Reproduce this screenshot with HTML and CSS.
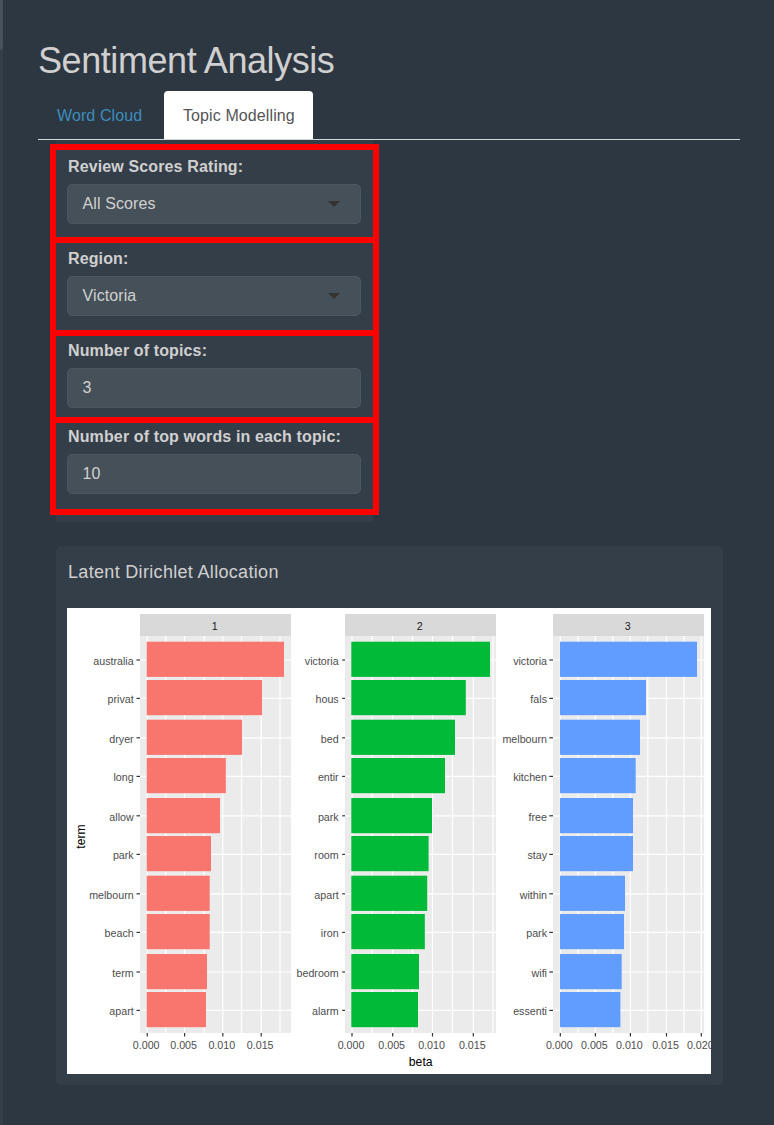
FILE: index.html
```html
<!DOCTYPE html>
<html lang="en">
<head>
<meta charset="utf-8">
<title>Sentiment Analysis</title>
<link rel="stylesheet" href="styles.css">
</head>
<body>
<div class="sidebar-edge"><div class="scroll-thumb"></div></div>
<main class="page">
  <h1 class="title">Sentiment Analysis</h1>
  <nav class="tabs">
    <a class="tab">Word Cloud</a>
    <a class="tab tab-active">Topic Modelling</a>
  </nav>
  <section class="filters">
    <div class="field field-score"><label class="label">Review Scores Rating:</label><div class="control">All Scores<i class="caret"></i></div></div>
    <div class="field field-region"><label class="label">Region:</label><div class="control">Victoria<i class="caret"></i></div></div>
    <div class="field field-topics"><label class="label">Number of topics:</label><div class="control">3</div></div>
    <div class="field field-words"><label class="label">Number of top words in each topic:</label><div class="control">10</div></div>
  </section>
  <section class="card">
    <h2 class="card-title">Latent Dirichlet Allocation</h2>
    <svg class="chart" id="chart" viewBox="67 608 644 466" width="644" height="466"></svg>
  </section>
</main>
<script src="chart.js"></script>
</body>
</html>
```
FILE: styles.css
```css
* { box-sizing: border-box; }
body {
  margin: 0;
  height: 1125px;
  display: flex;
  overflow: hidden;
  background: #2d3741;
  color: #d0d0d0;
  font: 16px/22px "Liberation Sans", Arial, sans-serif;
  letter-spacing: 0.1px;
}
.sidebar-edge { width: 3px; background: #343e48; }
.scroll-thumb { height: 50px; background: #46515a; border-radius: 0 0 3px 0; }
.page { width: 737px; padding: 41px 0 0 35px; }
.title { margin: 0; height: 50px; font-size: 36px; line-height: 40px; font-weight: 400; letter-spacing: -0.43px; white-space: nowrap; }
.tabs { display: flex; height: 49px; border-bottom: 1px solid #d2d4d6; width: 702px; }
.tab { padding: 14px 18px 0 19px; height: 48px; width: 126px; color: #3c8dbc; white-space: nowrap; }
.tab-active { width: 149px; color: #555; background: #fff; border-radius: 4px 4px 0 0; }
.filters { margin-left: 12px; width: 329px; height: 382px; padding-top: 4px; background: linear-gradient(#343e48, #343e48) 6px 0 / 317px 382px no-repeat; }
.field { border: 6px solid #f00; padding: 0 11px; }
.field + .field { border-top: 0; }
.field-score { height: 99px; padding-top: 6px; }
.field-region { height: 93px; padding-top: 5px; }
.field-topics { height: 87px; padding-top: 4px; }
.field-words { height: 92px; padding-top: 3px; }
.label { display: block; height: 28px; padding-left: 1px; font-weight: 700; letter-spacing: 0.13px; white-space: nowrap; }
.control { display: flex; align-items: center; justify-content: space-between; height: 40px; width: 294px; border: 1px solid #4a5761; border-radius: 5px; background: #455059; padding: 0 20px 0 14.5px; }
.caret { border: 6px solid transparent; border-top-color: #333; border-bottom: 0; }
.card { margin: 24px 0 0 18px; width: 667px; height: 539px; padding: 15px 0 0 11px; background: #343e48; border-radius: 5px; }
.card-title { margin: 0; height: 47px; padding-left: 1px; font-size: 18px; line-height: 22px; font-weight: 400; letter-spacing: 0.32px; }
.chart { display: block; background: #fff; font: 10.7px "Liberation Sans", Arial, sans-serif; letter-spacing: 0; }
.strip { fill: #d9d9d9; }
.panel { fill: #ebebeb; }
.grid { stroke: #fff; stroke-width: 1.2; }
.tick { stroke: #333; stroke-width: 1.2; }
.tick-text { fill: #4d4d4d; }
.strip-text { fill: #1a1a1a; }
.axis-title { fill: #000; font-size: 12.2px; }
.red { fill: #f8766d; }
.green { fill: #00ba38; }
.blue { fill: #619cff; }
```
FILE: chart.js
```js
const chart = document.getElementById('chart');
const barTops = [641.7, 680, 719.7, 758, 798, 836, 875.7, 914, 954, 992];
const rows = [660, 698.4, 737.8, 776.4, 815.8, 854.4, 893.8, 932.4, 972, 1010.4];
const facets = [
  { x: 140, start: 146.7, color: 'red', tick: 136.5, label: 133.7,
    columns: [147.2, 165.7, 184.6, 204.3, 222.8, 241.5, 261.2, 280],
    ends: [284, 262, 242, 225.8, 220, 211, 209.7, 209.7, 207, 206],
    terms: ['australia', 'privat', 'dryer', 'long', 'allow', 'park', 'melbourn', 'beach', 'term', 'apart'] },
  { x: 345, start: 351.3, color: 'green', tick: 342.2, label: 338.7,
    columns: [352, 372, 392.7, 412.5, 432.5, 452.5, 473.3, 493],
    ends: [490, 465.8, 455, 445, 432, 428.6, 427.2, 424.8, 419, 418],
    terms: ['victoria', 'hous', 'bed', 'entir', 'park', 'room', 'apart', 'iron', 'bedroom', 'alarm'] },
  { x: 553, start: 560, color: 'blue', tick: 549.3, label: 547,
    columns: [560.3, 578, 595.4, 612.8, 630.4, 647.8, 666.5, 684, 701.3],
    ends: [697, 646, 640, 635.7, 633, 633, 625, 624, 621.7, 620.4],
    terms: ['victoria', 'fals', 'melbourn', 'kitchen', 'free', 'stay', 'within', 'park', 'wifi', 'essenti'] }
];
const rect = (cls, x, y, w, h) => `<rect class="${cls}" x="${x}" y="${y}" width="${w}" height="${h}"/>`;
const line = (cls, x1, y1, x2, y2) => `<line class="${cls}" x1="${x1}" y1="${y1}" x2="${x2}" y2="${y2}"/>`;
const text = (cls, x, y, anchor, s) => `<text class="${cls}" x="${x}" y="${y}" text-anchor="${anchor}">${s}</text>`;
let out = '';
facets.forEach((f, n) => {
  out += rect('strip', f.x, 614, 151, 22) + rect('panel', f.x, 636, 151, 397);
  out += text('strip-text', f.x + 74.8, 630, 'middle', n + 1);
  f.columns.forEach(x => { out += line('grid', x, 636, x, 1033); });
  rows.forEach(y => { out += line('grid', f.x, y, f.x + 151, y); });
  f.terms.forEach((term, i) => {
    out += rect(f.color, f.start, barTops[i], f.ends[i] - f.start, 35.2);
    out += line('tick', f.tick, rows[i], f.x, rows[i]);
    out += text('tick-text', f.label, rows[i] + 4.8, 'end', term);
  });
  f.columns.forEach((x, i) => {
    if (i % 2) return;
    out += line('tick', x, 1033, x, 1036.5);
    out += text('tick-text', x - 1, 1049, 'middle', (i / 2 * 0.005).toFixed(3));
  });
});
out += text('axis-title', 420.7, 1066, 'middle', 'beta');
out += '<text class="axis-title" transform="translate(85 836.5) rotate(-90)" text-anchor="middle">term</text>';
chart.innerHTML = out;
```
